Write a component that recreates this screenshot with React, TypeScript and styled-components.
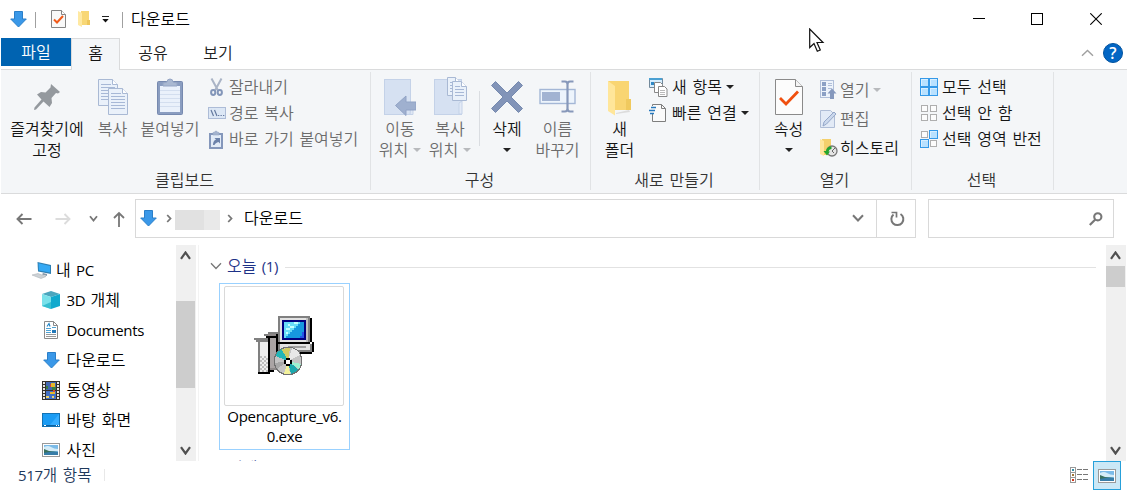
import React from "react";
import styled, { createGlobalStyle } from "styled-components";

const Global = createGlobalStyle`
  * { box-sizing: border-box; }
  html, body { margin: 0; padding: 0; background: #fff; }
  body {
    font-family: "Open Sans", "Noto Sans CJK KR", sans-serif;
    font-size: 16px;
    color: #111;
    overflow: hidden;
  }
  svg { display: block; flex: none; }
`;

const Window = styled.div`
  position: relative;
  width: 1127px;
  height: 491px;
  display: flex;
  flex-direction: column;
  background: #fff;
  overflow: hidden;
`;

const Text = styled.span<{ $color?: string; $size?: number; $track?: number }>`
  display: block;
  white-space: pre;
  line-height: 20px;
  font-weight: 350;
  word-spacing: 1.6px;
  color: ${(p) => p.$color ?? "#1a1a1a"};
  font-size: ${(p) => p.$size ?? 16}px;
  letter-spacing: ${(p) => p.$track ?? 0}px;
`;
const LatinText = styled(Text)`
  font-weight: 400;
  font-size: 15px;
  letter-spacing: -0.3px;
`;
const Latin = styled.span`
  font-weight: 400;
  font-size: 15px;
  letter-spacing: -0.3px;
`;

/* Title bar */
const TitleBar = styled.header`
  height: 38px;
  display: flex;
  align-items: center;
  padding-left: 10px;
`;
const QuickAccess = styled.div`
  display: flex;
  align-items: center;
  flex: 1;
`;
const TitleDivider = styled.i<{ $l: number; $r: number }>`
  width: 1px;
  height: 16px;
  margin: 1px ${(p) => p.$r}px 0 ${(p) => p.$l}px;
  background: #a0a0a0;
`;
const Gap = styled.i<{ $w: number }>`
  width: ${(p) => p.$w}px;
  flex: none;
`;
const WindowButtons = styled.div`
  display: grid;
  grid-template-columns: 58px 58px 59px;
  height: 38px;
  padding-right: 2px;
`;
const WindowButton = styled.button`
  border: 0;
  padding: 0;
  background: none;
  display: flex;
  align-items: center;
  justify-content: center;
`;

/* Tabs */
const TabRow = styled.nav`
  height: 31px;
  display: flex;
  padding-left: 1px;
`;
const FileTab = styled.div`
  width: 70px;
  height: 28px;
  padding-top: 4px;
  text-align: center;
  background: #0063b1;
`;
const Tab = styled.div<{ $active?: boolean; $w: number }>`
  width: ${(p) => p.$w}px;
  height: 32px;
  position: relative;
  z-index: 1;
  padding-top: 5px;
  text-align: center;
  background: ${(p) => (p.$active ? "#f4f6f8" : "transparent")};
  border: ${(p) => (p.$active ? "1px solid #dadbdc" : "0")};
  border-bottom: 0;
  ${(p) => p.$active && "padding-top: 4px;"}
`;
const TabTools = styled.div`
  margin-left: auto;
  display: flex;
  align-items: center;
  gap: 9px;
  padding: 0 4px 1px 0;
`;
const Help = styled.div`
  width: 20px;
  height: 20px;
  border-radius: 50%;
  background: #0366c4;
  border: 1px solid #02539f;
  color: #fff;
  font: 600 16px/18px "Open Sans", sans-serif;
  text-align: center;
`;

/* Ribbon */
const Ribbon = styled.section`
  height: 125px;
  margin-left: 1px;
  flex: none;
  display: flex;
  background: #f4f6f8;
  border-top: 1px solid #dadbdc;
  border-bottom: 1px solid #dadbdc;
  padding-top: 2px;
`;
const Group = styled.div<{ $w: number }>`
  width: ${(p) => p.$w}px;
  height: 118px;
  border-right: 1px solid #e1e3e5;
  display: flex;
  flex-direction: column;
`;
const GroupBody = styled.div`
  height: 98px;
  display: flex;
`;
const GroupName = styled.div`
  text-align: center;
  height: 20px;
  padding-right: 2px;
`;
const BigButton = styled.div<{ $w: number }>`
  width: ${(p) => p.$w}px;
  flex: none;
  display: flex;
  flex-direction: column;
  align-items: center;
`;
const BigIcon = styled.div`
  height: 47px;
  padding-top: 4px;
  flex: none;
`;
const Line = styled.div`
  height: 20px;
  display: flex;
  align-items: center;
  gap: 5px;
  & + & { margin-top: 1px; }
`;
const SmallList = styled.div<{ $row: number; $top: number; $left?: number }>`
  display: grid;
  grid-auto-rows: ${(p) => p.$row}px;
  align-content: start;
  padding: ${(p) => p.$top}px 0 0 ${(p) => p.$left ?? 0}px;
`;
const SmallButton = styled.div<{ $icon: number }>`
  display: grid;
  grid-template-columns: ${(p) => p.$icon}px auto auto;
  justify-content: start;
  align-items: center;
`;
const InnerDivider = styled.i`
  width: 1px;
  height: 55px;
  margin: 19px 0 0 8px;
  background: #dadde1;
`;
const Caret = styled.i<{ $off?: boolean; $left?: number }>`
  width: 0;
  height: 0;
  margin-left: ${(p) => p.$left ?? 0}px;
  border: 4px solid transparent;
  border-top-color: ${(p) => (p.$off ? "#b8babd" : "#222")};
  border-bottom: 0;
`;

/* Address row */
const AddressRow = styled.div`
  height: 51px;
  flex: none;
  display: flex;
  padding-top: 5px;
`;
const NavButtons = styled.div`
  width: 135px;
  height: 39px;
  display: flex;
  align-items: center;
  padding-left: 16px;
`;
const AddressBox = styled.div`
  width: 742px;
  height: 39px;
  border: 1px solid #d9d9d9;
  display: flex;
  align-items: center;
  padding: 0 0 1px 4px;
`;
const RefreshBox = styled.div`
  width: 39px;
  height: 39px;
  border: 1px solid #d9d9d9;
  border-left: 0;
  padding: 11px 0 0 13px;
`;
const SearchBox = styled.div`
  width: 186px;
  height: 39px;
  margin-left: 12px;
  border: 1px solid #d9d9d9;
  padding: 12px 0 0 160px;
`;
const Redacted = styled.i`
  width: 45px;
  height: 20px;
  margin: 3px 7px 0 3px;
  background: linear-gradient(90deg, #e1e1e1 29px, #e9e9e9 29px);
`;

/* Content */
const Main = styled.main`
  height: 216px;
  flex: none;
  display: flex;
  overflow: hidden;
`;
const Tree = styled.div`
  width: 176px;
  padding-top: 10px;
  overflow: hidden;
`;
const TreeRow = styled.div<{ $root?: boolean }>`
  height: 30px;
  display: flex;
  align-items: center;
  gap: ${(p) => (p.$root ? 5 : 6.5)}px;
  padding-left: ${(p) => (p.$root ? 32 : 42)}px;
`;
const Scrollbar = styled.div`
  width: 20px;
  height: 216px;
  flex: none;
  background: #f0f0f0;
  display: flex;
  flex-direction: column;
`;
const ScrollArrow = styled.div`
  height: 21px;
  padding: 6px 0 0 4px;
`;
const ScrollTrack = styled.div<{ $offset: number }>`
  flex: 1;
  padding-top: ${(p) => p.$offset}px;
`;
const Thumb = styled.div<{ $h: number }>`
  width: 19px;
  height: ${(p) => p.$h}px;
  background: #cdcdcd;
`;
const Splitter = styled.i`
  width: 1px;
  flex: none;
  margin: 0 11px 0 2px;
  background: #f3f3f3;
`;
const FileList = styled.div`
  width: 896px;
  flex: none;
  overflow: hidden;
  padding-top: 10px;
`;
const SectionHead = styled.div`
  height: 22px;
  display: flex;
  align-items: center;
`;
const Rule = styled.i`
  flex: 1;
  height: 1px;
  margin: 2px 10px 0 7px;
  background: #e2e2e2;
`;
const FileTile = styled.div`
  width: 131px;
  height: 167px;
  margin: 6px 0 7px 9px;
  border: 1px solid #99d1ff;
  padding: 2px 4px;
  text-align: center;
`;
const Preview = styled.div`
  width: 120px;
  height: 120px;
  border: 1px solid #d9d9d9;
  border-radius: 2px;
  padding: 29px 0 0 29px;
`;

/* Status bar */
const StatusBar = styled.footer`
  height: 30px;
  display: flex;
  padding-left: 18px;
`;
const StatusText = styled.div`
  width: 87px;
  height: 12px;
  margin-top: 8px;
  border-right: 1px solid #e8e8e8;
  display: flex;
  align-items: center;
`;
const ViewButtons = styled.div`
  margin-left: auto;
  display: flex;
  padding-right: 6px;
`;
const ViewButton = styled.div<{ $active?: boolean }>`
  width: 28px;
  height: 29px;
  display: flex;
  align-items: center;
  justify-content: center;
  ${(p) => p.$active && "border: 1px solid #26a0da; background: #cbe8f6;"}
`;
const Pointer = styled.div`
  position: absolute;
  left: 809px;
  top: 28px;
  z-index: 3;
`;

/* Icons */
type Box = { w: number; h: number; crisp?: boolean; vb?: string; children: React.ReactNode };
const Svg = ({ w, h, crisp, vb, children }: Box) => (
  <svg width={w} height={h} viewBox={vb ?? `0 0 ${w} ${h}`} fill="none" shapeRendering={crisp ? "crispEdges" : undefined}>
    {children}
  </svg>
);

const DownloadIcon = () => (
  <Svg w={17} h={17}>
    <path d="M4.500.5h8v7.500h3.800L8.500 16 .7 8h3.800z" fill="#3a98e8" stroke="#2a7fc9" />
  </Svg>
);

const PropertiesSmall = () => (
  <Svg w={15} h={18}>
    <path d="M.5.5h10l4 4v13H.5z" fill="#f9f9f9" stroke="#858585" />
    <path d="M10.500.5v4h4" stroke="#858585" fill="#fff" />
    <path d="M3 9.500l3 3 6-6.500" stroke="#f05a1a" strokeWidth="2" />
  </Svg>
);

const PropertiesBig = () => (
  <Svg w={28} h={36}>
    <path d="M.5.5H20.500l7 7v28H.5z" fill="#fcfcfc" stroke="#8a8a8a" />
    <path d="M20.500.5v7h7" fill="#f4f4f4" stroke="#8a8a8a" />
    <path d="M5 19l6 6L23 12.500" stroke="#f05010" strokeWidth="2.800" />
  </Svg>
);

const FolderSmall = () => (
  <Svg w={12} h={16}>
    <path d="M3 0h8v9h1v5H3z" fill="#f8d775" />
    <path d="M0 0l4 2v14l-4-2z" fill="#ffe9a2" />
    <path d="M9 9h3v5H9z" fill="#eec65c" />
  </Svg>
);

const FolderBig = () => (
  <Svg w={24} h={36}>
    <path d="M8 33l14-2-1-2-13 3z" fill="#dcdcdc" />
    <path d="M0 0h21v18h2v11H7z" fill="#f9d572" />
    <path d="M18 18h5v11h-5z" fill="#f0c95e" />
    <path d="M0 0l7 5v29.500L0 30z" fill="#ffe69a" />
  </Svg>
);

const Pin = () => (
  <Svg w={26} h={26}>
    <path d="M17 0l9 8-2 1.500-2-.5-4.500 5 .5 5-2.500 4-6-5.500L2 25.500l-2 .5 .5-2.500L7.500 15.500 3 10.500 7 8l4.500.5 5-5z" fill="#94999e" />
  </Svg>
);

const Sheet = ({ x, y, w = 19, h = 26 }: { x: number; y: number; w?: number; h?: number }) => (
  <g transform={`translate(${x} ${y})`}>
    <path d={`M.5.5H${w - 5.5}l5 5V${h - 0.5}H.5z`} fill="#eaf1fa" stroke="#a9b9d4" />
    <path d={`M${w - 5.5}.5v5h5`} fill="#fff" stroke="#a9b9d4" />
    {Array.from({ length: Math.floor((h - 7) / 3) }, (_, i) => (
      <path key={i} d={`M3 ${5.5 + i * 3}H${i === 0 ? w - 7 : w - 3}`} stroke="#a7b8d6" />
    ))}
  </g>
);
const CopyIcon = () => (
  <Svg w={31} h={37}>
    <Sheet x={1} y={0} w={20} h={27} />
    <Sheet x={11} y={9} w={20} h={27} />
  </Svg>
);

const PasteIcon = () => (
  <Svg w={26} h={37}>
    <rect x=".5" y="3.500" width="25" height="33" rx="1" fill="#8a9dc0" stroke="#7689af" />
    <path d="M3 8h20v26H3z" fill="#eaf1fb" />
    {[12.5, 16.5, 20.5, 24.5, 28.5].map((y) => (
      <path key={y} d={`M3 ${y}h20`} stroke="#d3deef" />
    ))}
    <path d="M6 8V5l4-1a3 3 0 016 0l4 1v3z" fill="#a9b8d1" stroke="#95a6c5" />
  </Svg>
);

const CutIcon = () => (
  <Svg w={13} h={18}>
    <path d="M1.500.5l6.500 12M11.500.5L5 12.500" stroke="#aab4c6" strokeWidth="2" />
    <ellipse cx="3.200" cy="14.500" rx="2.100" ry="2.400" stroke="#8396b9" strokeWidth="2" />
    <ellipse cx="9.800" cy="14.500" rx="2.100" ry="2.400" stroke="#8396b9" strokeWidth="2" />
  </Svg>
);

const PathIcon = () => (
  <Svg w={18} h={12}>
    <rect x=".5" y=".5" width="17" height="11" fill="#dce7f5" stroke="#adbcd7" />
    <path d="M3 3l2.500 6M6.500 3L9 9" stroke="#64799f" strokeWidth="1.200" />
    <path d="M10 8.500h1.300M12.500 8.500h1.300M15 8.500h1.300" stroke="#64799f" />
  </Svg>
);

const ShortcutIcon = () => (
  <Svg w={14} h={19}>
    <path d="M1 4h12v14H1z" fill="#e2ebf7" stroke="#8497bb" strokeWidth="2" />
    <path d="M4 5V2.500l2-.5a1 1 0 012 0l2 .5V5z" fill="#a3b3ce" stroke="#95a6c5" strokeWidth=".6" />
    <path d="M4 15c0-3 1-4.500 3-5.500L5.500 8H11v5.500L9.500 12C7.500 12.500 6 13.500 5.500 15z" fill="#6c82aa" />
  </Svg>
);

const MoveIcon = () => (
  <Svg w={32} h={37}>
    <rect x=".5" y=".5" width="26" height="35" fill="#d6e1f2" stroke="#c4d2e8" />
    <path d="M26 35.500l1-12 2 1v11z" fill="#dfe7f4" stroke="#c4d2e8" />
    <path d="M32 23H22v-6L11.500 26.500 22 36.500V31h10z" fill="#9fb0cf" stroke="#91a3c5" />
  </Svg>
);

const CopyToIcon = () => (
  <Svg w={33} h={39}>
    <rect x=".5" y="2.500" width="27" height="35" fill="#d6e1f2" stroke="#c4d2e8" />
    <path d="M25 37V26l3-2v13z" fill="#e3eaf6" stroke="#c4d2e8" />
    <Sheet x={13} y={0} w={14} h={19} />
    <Sheet x={18} y={4} w={15} h={20} />
  </Svg>
);

const DeleteIcon = () => (
  <Svg w={32} h={32}>
    <path d="M4.500.5L16 12 27.500.5l4 4L20 16l11.500 11.500-4 4L16 20 4.500 31.500l-4-4L12 16 .5 4.500z" fill="#8294b8" stroke="#768aaf" />
  </Svg>
);

const RenameIcon = () => (
  <Svg w={37} h={34}>
    <rect x="1" y="9.500" width="35" height="14" fill="#edf4fc" stroke="#a4b7d6" strokeWidth="1.400" />
    <path d="M3 12h18v9H3z" fill="#a2b3d2" />
    <path d="M22.500 1.500h3.500q2.500 0 2.500 3v24q0 3-2.500 3h-3.500M34.500 1.500H31q-2.500 0-2.500 3v24q0 3 2.500 3h3.500" stroke="#8798ba" strokeWidth="2.200" />
  </Svg>
);

const NewItemIcon = () => (
  <Svg w={19} h={19}>
    <path d="M.5.5h13v9H.5z" fill="#d7efff" stroke="#72899b" />
    <path d="M0 0h13v2H0z" fill="#4ba0d2" />
    <path d="M2 4h3v3H2z" fill="#3089c5" />
    <path d="M5.500 4.500h6l2 2v8h-8z" fill="#fff" stroke="#888" />
    <path d="M9.500 8.500h6l2.500 2.500v7.500H9.500z" fill="#fff" stroke="#888" />
    <path d="M11 12.500h5M11 14.500h5M11 16.500h5" stroke="#b9b9b9" />
  </Svg>
);

const EasyAccessIcon = () => (
  <Svg w={18} h={18}>
    <path d="M3.500.5h9l4 4v13h-13z" fill="#fafafa" stroke="#7e7e7e" />
    <path d="M12.500.5v4h4" stroke="#7e7e7e" />
    <path d="M1 2h8v8H1z" fill="#fafafa" />
    <path d="M2 3.500h5M0 6.500h6M1 9.500h4" stroke="#2778bd" strokeWidth="1.300" />
  </Svg>
);

const OpenIcon = () => (
  <Svg w={17} h={19}>
    <rect x=".5" y=".5" width="13" height="17" fill="#edf3fb" stroke="#b0bfd9" />
    <path d="M2 2h4v4H2zM2 7h4v4H2zM2 12h4v4H2z" fill="#8ba0c5" />
    <path d="M8 3.500h4M8 5.500h4M8 8.500h4" stroke="#b0bfd9" />
    <path d="M12 8.500l4.500 5H14V19h-4v-5.500H7.500z" fill="#8598bd" />
  </Svg>
);

const EditIcon = () => (
  <Svg w={17} h={18}>
    <path d="M.5.5h10l4 4v13H.5z" fill="#e2eaf6" stroke="#afbdd6" />
    <path d="M3 16l1-4L14 2l2 2L6.500 14z" fill="#cbd8ec" stroke="#94a7c9" />
  </Svg>
);

const HistoryIcon = () => (
  <Svg w={18} h={18}>
    <path d="M2 0h9v16H2z" fill="#f4d06c" />
    <path d="M0 0l4 2v15l-4-2z" fill="#ffe69c" />
    <circle cx="12" cy="12" r="5" fill="#e4e4e4" stroke="#777" strokeWidth="1.300" />
    <path d="M12 12l3-3M12 12l2 2" stroke="#666" />
    <path d="M11.500 7.500A4.800 4.800 0 006 12H3.500l3.500 4.500L10 12.500H8.500q.5-2.500 3-2.500z" fill="#23a52d" />
  </Svg>
);

const cells: [number, number][] = [[0, 0], [9, 0], [0, 9], [9, 9]];
const GridIcon = ({ on }: { on: number[] }) => (
  <Svg w={18} h={18} crisp>
    {cells.map(([x, y], i) =>
      on.includes(i) ? (
        <React.Fragment key={i}>
          <rect x={x} y={y} width="9" height="9" fill="#3599e8" />
          <rect x={x + 1} y={y + 1} width="7" height="7" fill="#b9e1ff" />
          <path d={`M${x + 1} ${y + 1}h7v1h-6v6h-1z`} fill="#d9efff" />
        </React.Fragment>
      ) : (
        <rect key={i} x={x + 1.5} y={y + 1.5} width="6" height="6" fill="#fcfcfc" stroke="#aeaeae" />
      )
    )}
  </Svg>
);

const Chevron = ({ dir, w, h, color, sw = 1.8 }: { dir: "up" | "down" | "right"; w: number; h: number; color: string; sw?: number }) => (
  <Svg w={w} h={h}>
    <path
      d={
        dir === "down" ? `M1 1.200L${w / 2} ${h - 1.5}L${w - 1} 1.200`
        : dir === "up" ? `M1 ${h - 1.2}L${w / 2} 1.500L${w - 1} ${h - 1.2}`
        : `M1.200 1L${w - 1.5} ${h / 2}L1.200 ${h - 1}`
      }
      stroke={color}
      strokeWidth={sw}
    />
  </Svg>
);

const Arrow = ({ color, flip }: { color: string; flip?: boolean }) => (
  <Svg w={16} h={12}>
    <path transform={flip ? "matrix(-1 0 0 1 16 0)" : undefined} d="M1.500 6H15.500M6.500 1L1.500 6l5 5" stroke={color} strokeWidth="1.900" />
  </Svg>
);

const PcIcon = () => (
  <Svg w={19} h={17}>
    <path d="M5.500 0L19 3v9L6 9.500z" fill="#2d7fb3" />
    <path d="M6.500 1.200L18 4v6.500L7 8.500z" fill="#35a9f4" />
    <path d="M11 11l4 1v2l-5-1.500z" fill="#879aab" />
    <path d="M0 13l6-1.500 8 3L9 16.500z" fill="#cdd2d6" stroke="#aeb5ba" strokeWidth=".6" />
  </Svg>
);
const CubeIcon = () => (
  <Svg w={18} h={18}>
    <path d="M0 3l9-3 9 3-9 3z" fill="#4ba5bd" />
    <path d="M0 3l9 3v12l-9-3z" fill="#79e1ea" />
    <path d="M18 3L9 6v12l9-3z" fill="#10a9cd" />
    <path d="M0 15l9-4v7z" fill="#36bed0" />
  </Svg>
);
const DocumentIcon = () => (
  <Svg w={16} h={18}>
    <path d="M1.500.5h9l4 4v13h-13z" fill="#fff" stroke="#8a8a8a" />
    <path d="M10.500.5v4h4" stroke="#8a8a8a" />
    <path d="M4 5.500l2-3 1 3" stroke="#2386c8" strokeWidth="1.200" />
    <path d="M3 7.500h5M3 9.500h5M3 11.500h5M9 6.500h4" stroke="#4fa3d5" />
    <path d="M9 9h4v3H9z" fill="#2378b8" />
    <path d="M3 13.500h10M3 15.500h10" stroke="#999" />
  </Svg>
);
const VideoIcon = () => (
  <Svg w={18} h={19} crisp>
    <path d="M0 0h18v19H0z" fill="#33302c" />
    <path d="M4 1h10v8H4z" fill="#4268b3" />
    <path d="M4 10h10v8H4z" fill="#416fc4" />
    <path d="M9 2h4v4H9zM8 11h5v2H8z" fill="#e3ba2e" />
    <path d="M4 5h2v3H4zM10 6h4v3h-4z" fill="#397d45" />
    <path d="M8 3h1v3H8zM11 9h2v2h-2z" fill="#d2423b" />
    <path d="M4 15h3v2H4zM10 15h2v2h-2z" fill="#ead46c" />
    {[1, 4, 7, 10, 13, 16].map((y) => (
      <path key={y} d={`M1 ${y}h2v2H1zM15 ${y}h2v2h-2z`} fill="#e6e6e6" />
    ))}
  </Svg>
);
const DesktopIcon = () => (
  <Svg w={18} h={14}>
    <rect x=".5" y=".5" width="17" height="13" fill="#1b9cf4" stroke="#1272b4" />
    <path d="M17 1v11h-9z" fill="#35adff" />
    <path d="M1 12.500h16" stroke="#0d619e" />
    <path d="M2 12.500h2M14 12.500h1M16 12.500h1" stroke="#fff" />
  </Svg>
);
const PictureIcon = () => (
  <Svg w={18} h={14}>
    <rect x=".5" y=".5" width="17" height="13" fill="#fff" stroke="#999" />
    <path d="M2 2h14v10H2z" fill="#7bbbe8" />
    <path d="M2 4q4-2 7 0t7 2v2H2z" fill="#d4ecf8" />
    <path d="M2 6l5 2 9 1v1H2z" fill="#39705d" />
    <path d="M2 10q7-2 14-1v3H2z" fill="#377da8" />
  </Svg>
);

const InstallerIcon = () => (
  <Svg w={60} h={60} vb="0 0 30 30" crisp>
    {/* monitor */}
    <path d="M12 0h16v13H12z" fill="#808080" />
    <path d="M13 1h14v12H13z" fill="#e2e2e2" />
    <path d="M26 1h1v12h-1z" fill="#c0c0c0" />
    <path d="M28 1h1v12h-1zM12 13h16v1H12z" fill="#000" />
    <path d="M14 2h12v10H14z" fill="#000080" />
    <path d="M15 3h10v8H15z" fill="#1698e0" />
    <path d="M15 3h8v1h-1v1h-1v1h-1v1h-1v1h-1v1h-1v1h-1v1h-1z" fill="#67dcf8" />
    <path d="M20 3h2v1h-2zM18 5h2v1h-2zM16 6h2v1h-2zM17 4h1v1h-1zM16 8h1v1h-1z" fill="#c2ffff" />
    <path d="M23 10h2v1h-2zM24 8h1v2h-1z" fill="#2454e8" />
    {/* desktop unit */}
    <path d="M12 14h17v4H12z" fill="#808080" />
    <path d="M13 14h15v3H13z" fill="#e2e2e2" />
    <path d="M17 15h9v1h-9z" fill="#a0a0a0" />
    <path d="M29 13h1v5h-1zM23 18h6v1h-6z" fill="#000" />
    {/* box */}
    <path d="M7 8h5v1H7zM5 9h3v1H5zM0 11h7v1H0zM1 12h2v1H1z" fill="#808080" />
    <path d="M7 9h5v18H7z" fill="#8d8888" />
    <path d="M8 10h3v16H8z" fill="#aaa4a4" />
    <path d="M6 10h5v1H6zM7 11h1v17H7zM11 9h1v9h-1zM2 28h6v1H2zM8 27h2v1H8z" fill="#000" />
    <path d="M2 13h5v15H2z" fill="#eee" />
    <path d="M2 12h1v16H2zM2 12h5v1H2z" fill="#808080" />
    {Array.from({ length: 8 }, (_, r) =>
      [0, 1].map((c) => <rect key={`${r}${c}`} x={3 + c * 2 + (r % 2)} y={20 + r} width="1" height="1" fill="#bdbdbd" />)
    )}
    {/* disc */}
    <circle cx="17" cy="22.500" r="7.200" fill="#707070" />
    <circle cx="17" cy="22.500" r="6.600" fill="#c4c4c4" />
    <path d="M17 22.500L13.500 17l2.500-1h2z" fill="#cfcb62" />
    <path d="M17 22.500L10.800 20l1-2 2-1.500z" fill="#22b6b7" />
    <path d="M17 22.500l2-6.500 3 1.500 1 2z" fill="#e8e8e8" />
    <path d="M17 22.500L23.500 24l-1 2.500z" fill="#9df2d1" />
    <path d="M17 22.500l5 4-1.500 1.500-2 1z" fill="#1ba9ae" />
    <path d="M17 22.500l1 6.500h-3z" fill="#f3f19b" />
    <path d="M17 22.500l-6.500 1 1 3z" fill="#a7a7a7" />
    <path d="M16 21h2v1h1v2h-1v1h-2v-1h-1v-2h1z" fill="#000" />
    <path d="M16 22h2v2h-2z" fill="#fff" />
  </Svg>
);

const DetailsIcon = () => (
  <Svg w={18} h={17} crisp>
    {[0, 5, 10].map((y, i) => (
      <React.Fragment key={y}>
        <rect x=".5" y={y + 0.5} width="5" height="5" fill="#fff" stroke="#999" />
        <rect x="2" y={y + 2} width="2" height="2" fill={["#338fa8", "#a17535", "#d33417"][i]} />
        <path d={`M7 ${y + 2.5}h5M13 ${y + 2.5}h5`} stroke="#777" />
      </React.Fragment>
    ))}
  </Svg>
);

const OFF = "#6c6c6c";
const ON = "#151515";
const CAPTION = "#333";

type BigProps = { w: number; icon: React.ReactNode; lines: string[]; off?: boolean; caret?: "inline" | "below"; iconTop?: number };
const IconShift = styled.div<{ $y: number }>`
  padding-top: ${(p) => p.$y}px;
`;
const Big = ({ w, icon, lines, off, caret, iconTop = 0 }: BigProps) => (
  <BigButton $w={w}>
    <BigIcon><IconShift $y={iconTop}>{icon}</IconShift></BigIcon>
    {lines.map((t, i) => (
      <Line key={t}>
        <Text $color={off ? OFF : ON}>{t}</Text>
        {caret === "inline" && i === lines.length - 1 && <Caret $off={off} />}
      </Line>
    ))}
    {caret === "below" && <Line><Caret /></Line>}
  </BigButton>
);

type SmallProps = { icon: React.ReactNode; col: number; text: string; off?: boolean; caret?: boolean };
const Small = ({ icon, col, text, off, caret }: SmallProps) => (
  <SmallButton $icon={col}>
    {icon}
    <Text $color={off ? OFF : ON}>{text}</Text>
    {caret && <Caret $off={off} $left={4} />}
  </SmallButton>
);
const Name = ({ children }: { children: string }) => (
  <GroupName><Text $color={CAPTION}>{children}</Text></GroupName>
);

const IconSlot = styled.div<{ $w?: number }>`
  width: ${(p) => p.$w ?? 18}px;
  display: flex;
  justify-content: center;
`;

const places: { key: string; label: React.ReactNode; icon: React.ReactNode }[] = [
  { key: "objects", label: <Text $color="#000"><Latin>3D </Latin>개체</Text>, icon: <CubeIcon /> },
  { key: "documents", label: <LatinText $color="#000">Documents</LatinText>, icon: <IconSlot><DocumentIcon /></IconSlot> },
  { key: "downloads", label: <Text $color="#000">다운로드</Text>, icon: <IconSlot><DownloadIcon /></IconSlot> },
  { key: "videos", label: <Text $color="#000">동영상</Text>, icon: <VideoIcon /> },
  { key: "desktop", label: <Text $color="#000">바탕 화면</Text>, icon: <DesktopIcon /> },
  { key: "pictures", label: <Text $color="#000">사진</Text>, icon: <PictureIcon /> },
];

const ScrollBar = ({ offset, size }: { offset: number; size: number }) => (
  <Scrollbar>
    <ScrollArrow><Chevron dir="up" w={11} h={9} color="#505050" sw={2.2} /></ScrollArrow>
    <ScrollTrack $offset={offset}><Thumb $h={size} /></ScrollTrack>
    <ScrollArrow><Chevron dir="down" w={11} h={9} color="#505050" sw={2.2} /></ScrollArrow>
  </Scrollbar>
);

export default function App() {
  return (
    <Window>
      <Global />
      <TitleBar>
        <QuickAccess>
          <DownloadIcon />
          <TitleDivider $l={8} $r={15} />
          <PropertiesSmall />
          <Gap $w={12} />
          <FolderSmall />
          <Gap $w={12} />
          <Svg w={7} h={7}><path d="M0 .5h7" stroke="#222" /><path d="M.3 3h6.400L3.500 6.500z" fill="#111" /></Svg>
          <TitleDivider $l={13} $r={8} />
          <Text $color="#000">다운로드</Text>
        </QuickAccess>
        <WindowButtons>
          <WindowButton aria-label="최소화"><Svg w={12} h={12} crisp><path d="M0 5.500h12" stroke="#000" /></Svg></WindowButton>
          <WindowButton aria-label="최대화"><Svg w={12} h={12} crisp><path d="M.5.5h11v11H.5z" stroke="#000" /></Svg></WindowButton>
          <WindowButton aria-label="닫기"><Svg w={12} h={12}><path d="M.3.3l11.400 11.400M11.700.3L.3 11.700" stroke="#000" strokeWidth="1.100" /></Svg></WindowButton>
        </WindowButtons>
      </TitleBar>

      <TabRow>
        <FileTab><Text $color="#fff">파일</Text></FileTab>
        <Tab $active $w={49}><Text $color={ON}>홈</Text></Tab>
        <Tab $w={66}><Text $color="#222">공유</Text></Tab>
        <Tab $w={64}><Text $color="#222">보기</Text></Tab>
        <TabTools>
          <Chevron dir="up" w={13} h={8} color="#a0a0a0" sw={1.4} />
          <Help>?</Help>
        </TabTools>
      </TabRow>

      <Ribbon>
        <Group $w={370}>
          <GroupBody>
            <Big w={92} icon={<Pin />} iconTop={8} lines={["즐겨찾기에", "고정"]} />
            <Big w={39} icon={<CopyIcon />} iconTop={3} lines={["복사"]} off />
            <Big w={76} icon={<PasteIcon />} iconTop={2} lines={["붙여넣기"]} off />
            <SmallList $row={26} $top={2}>
              <Small col={21} icon={<IconSlot $w={16}><CutIcon /></IconSlot>} text="잘라내기" off />
              <Small col={21} icon={<PathIcon />} text="경로 복사" off />
              <Small col={21} icon={<IconSlot $w={16}><ShortcutIcon /></IconSlot>} text="바로 가기 붙여넣기" off />
            </SmallList>
          </GroupBody>
          <Name>클립보드</Name>
        </Group>
        <Group $w={220}>
          <GroupBody>
            <Big w={58} icon={<MoveIcon />} iconTop={3} lines={["이동", "위치"]} off caret="inline" />
            <Big w={42} icon={<CopyToIcon />} iconTop={1} lines={["복사", "위치"]} off caret="inline" />
            <InnerDivider />
            <Big w={54} icon={<DeleteIcon />} iconTop={5} lines={["삭제"]} caret="below" />
            <Big w={47} icon={<RenameIcon />} iconTop={4} lines={["이름", "바꾸기"]} off />
          </GroupBody>
          <Name>구성</Name>
        </Group>
        <Group $w={169}>
          <GroupBody>
            <Big w={57} icon={<FolderBig />} iconTop={5} lines={["새", "폴더"]} />
            <SmallList $row={26} $top={2} $left={1}>
              <Small col={23} icon={<NewItemIcon />} text="새 항목" caret />
              <Small col={23} icon={<EasyAccessIcon />} text="빠른 연결" caret />
            </SmallList>
          </GroupBody>
          <Name>새로 만들기</Name>
        </Group>
        <Group $w={152}>
          <GroupBody>
            <Big w={57} icon={<PropertiesBig />} iconTop={3} lines={["속성"]} caret="below" />
            <SmallList $row={29} $top={3} $left={3}>
              <Small col={20} icon={<OpenIcon />} text="열기" off caret />
              <Small col={20} icon={<EditIcon />} text="편집" off />
              <Small col={20} icon={<HistoryIcon />} text="히스토리" />
            </SmallList>
          </GroupBody>
          <Name>열기</Name>
        </Group>
        <Group $w={142}>
          <GroupBody>
            <SmallList $row={26} $top={2} $left={8}>
              <Small col={22} icon={<GridIcon on={[0, 1, 2, 3]} />} text="모두 선택" />
              <Small col={22} icon={<GridIcon on={[]} />} text="선택 안 함" />
              <Small col={22} icon={<GridIcon on={[1, 2]} />} text="선택 영역 반전" />
            </SmallList>
          </GroupBody>
          <Name>선택</Name>
        </Group>
      </Ribbon>

      <AddressRow>
        <NavButtons>
          <Arrow color="#777" />
          <Gap $w={23} />
          <Arrow color="#dcdcdc" flip />
          <Gap $w={18} />
          <Chevron dir="down" w={9} h={7} color="#777" />
          <Gap $w={15} />
          <Svg w={12} h={18}><path d="M6 17V3M1 8l5-5 5 5" stroke="#777" strokeWidth="1.800" /></Svg>
        </NavButtons>
        <AddressBox>
          <DownloadIcon />
          <Gap $w={9} />
          <Chevron dir="right" w={6} h={9} color="#777" />
          <Redacted />
          <Chevron dir="right" w={6} h={9} color="#777" />
          <Gap $w={11} />
          <Text $color="#000">다운로드</Text>
          <Gap $w={549} />
          <Chevron dir="down" w={12} h={8} color="#777" sw={2} />
        </AddressBox>
        <RefreshBox>
          <Svg w={15} h={16}><path d="M10.500 3A6 6 0 113.500 3.500" stroke="#777" strokeWidth="2" /><path d="M1.500 1.500h5v5" stroke="#777" strokeWidth="1.700" /></Svg>
        </RefreshBox>
        <SearchBox>
          <Svg w={14} h={14}><circle cx="8.800" cy="4.800" r="3.600" stroke="#777" strokeWidth="2.100" /><path d="M6.300 7.500L.8 13" stroke="#777" strokeWidth="2.200" /></Svg>
        </SearchBox>
      </AddressRow>

      <Main>
        <Tree>
          <TreeRow $root><PcIcon /><Text $color="#000">내<Latin> PC</Latin></Text></TreeRow>
          {places.map((p) => (
            <TreeRow key={p.key}>{p.icon}{p.label}</TreeRow>
          ))}
        </Tree>
        <ScrollBar offset={35} size={87} />
        <Splitter />
        <FileList>
          <SectionHead>
            <Chevron dir="down" w={12} h={8} color="#777" sw={1.3} />
            <Gap $w={5} />
            <Text $color="#1e3287">오늘<Latin> (1)</Latin></Text>
            <Rule />
          </SectionHead>
          <FileTile>
            <Preview><InstallerIcon /></Preview>
            <LatinText $color="#000">Opencapture_v6.</LatinText>
            <LatinText $color="#000">0.exe</LatinText>
          </FileTile>
          <SectionHead>
            <Gap $w={18} />
            <Text $color="#1e3287">어제</Text>
          </SectionHead>
        </FileList>
        <ScrollBar offset={0} size={21} />
      </Main>

      <StatusBar>
        <StatusText><Text $color="#1e395b" $size={15.6}><Latin>517</Latin>개 항목</Text></StatusText>
        <ViewButtons>
          <ViewButton><DetailsIcon /></ViewButton>
          <ViewButton $active><PictureIcon /></ViewButton>
        </ViewButtons>
      </StatusBar>

      <Pointer>
        <Svg w={16} h={25}>
          <path d="M.7 1v18.500l4.300-4 3.300 7.800 3-1.300-3.300-7.500h6z" fill="#fff" stroke="#111" strokeWidth="1.200" />
        </Svg>
      </Pointer>
    </Window>
  );
}
